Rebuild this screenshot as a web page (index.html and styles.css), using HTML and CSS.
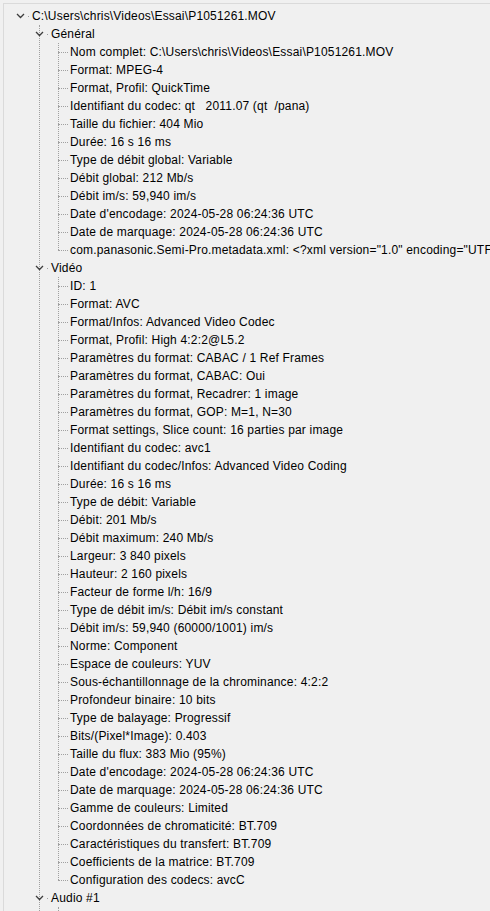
FILE: index.html
```html
<!DOCTYPE html>
<html lang="fr">
<head>
<meta charset="utf-8">
<title>MediaInfo</title>
<link rel="stylesheet" href="styles.css">
</head>
<body>
<div class="frame">
  <ul class="tree level0">
    <li class="node">
      <div class="row"><span class="exp open"><svg viewBox="0 0 9 6" width="9" height="6"><polyline points="1,1 4.5,4.5 8,1"/></svg></span><span class="label">C:\Users\chris\Videos\Essai\P1051261.MOV</span></div>
      <ul class="tree level1">
        <li class="node">
          <div class="row"><span class="exp open"><svg viewBox="0 0 9 6" width="9" height="6"><polyline points="1,1 4.5,4.5 8,1"/></svg></span><span class="label">Général</span></div>
          <ul class="tree level2">
            <li class="leaf"><div class="row"><span class="exp"></span><span class="label">Nom complet: C:\Users\chris\Videos\Essai\P1051261.MOV</span></div></li>
            <li class="leaf"><div class="row"><span class="exp"></span><span class="label">Format: MPEG-4</span></div></li>
            <li class="leaf"><div class="row"><span class="exp"></span><span class="label">Format, Profil: QuickTime</span></div></li>
            <li class="leaf"><div class="row"><span class="exp"></span><span class="label">Identifiant du codec: qt   2011.07 (qt  /pana)</span></div></li>
            <li class="leaf"><div class="row"><span class="exp"></span><span class="label">Taille du fichier: 404 Mio</span></div></li>
            <li class="leaf"><div class="row"><span class="exp"></span><span class="label">Durée: 16 s 16 ms</span></div></li>
            <li class="leaf"><div class="row"><span class="exp"></span><span class="label">Type de débit global: Variable</span></div></li>
            <li class="leaf"><div class="row"><span class="exp"></span><span class="label">Débit global: 212 Mb/s</span></div></li>
            <li class="leaf"><div class="row"><span class="exp"></span><span class="label">Débit im/s: 59,940 im/s</span></div></li>
            <li class="leaf"><div class="row"><span class="exp"></span><span class="label">Date d'encodage: 2024-05-28 06:24:36 UTC</span></div></li>
            <li class="leaf"><div class="row"><span class="exp"></span><span class="label">Date de marquage: 2024-05-28 06:24:36 UTC</span></div></li>
            <li class="leaf"><div class="row"><span class="exp"></span><span class="label">com.panasonic.Semi-Pro.metadata.xml: &lt;?xml version="1.0" encoding="UTF-8"?&gt;</span></div></li>
          </ul>
        </li>
        <li class="node">
          <div class="row"><span class="exp open"><svg viewBox="0 0 9 6" width="9" height="6"><polyline points="1,1 4.5,4.5 8,1"/></svg></span><span class="label">Vidéo</span></div>
          <ul class="tree level2">
            <li class="leaf"><div class="row"><span class="exp"></span><span class="label">ID: 1</span></div></li>
            <li class="leaf"><div class="row"><span class="exp"></span><span class="label">Format: AVC</span></div></li>
            <li class="leaf"><div class="row"><span class="exp"></span><span class="label">Format/Infos: Advanced Video Codec</span></div></li>
            <li class="leaf"><div class="row"><span class="exp"></span><span class="label">Format, Profil: High 4:2:2@L5.2</span></div></li>
            <li class="leaf"><div class="row"><span class="exp"></span><span class="label">Paramètres du format: CABAC / 1 Ref Frames</span></div></li>
            <li class="leaf"><div class="row"><span class="exp"></span><span class="label">Paramètres du format, CABAC: Oui</span></div></li>
            <li class="leaf"><div class="row"><span class="exp"></span><span class="label">Paramètres du format, Recadrer: 1 image</span></div></li>
            <li class="leaf"><div class="row"><span class="exp"></span><span class="label">Paramètres du format, GOP: M=1, N=30</span></div></li>
            <li class="leaf"><div class="row"><span class="exp"></span><span class="label">Format settings, Slice count: 16 parties par image</span></div></li>
            <li class="leaf"><div class="row"><span class="exp"></span><span class="label">Identifiant du codec: avc1</span></div></li>
            <li class="leaf"><div class="row"><span class="exp"></span><span class="label">Identifiant du codec/Infos: Advanced Video Coding</span></div></li>
            <li class="leaf"><div class="row"><span class="exp"></span><span class="label">Durée: 16 s 16 ms</span></div></li>
            <li class="leaf"><div class="row"><span class="exp"></span><span class="label">Type de débit: Variable</span></div></li>
            <li class="leaf"><div class="row"><span class="exp"></span><span class="label">Débit: 201 Mb/s</span></div></li>
            <li class="leaf"><div class="row"><span class="exp"></span><span class="label">Débit maximum: 240 Mb/s</span></div></li>
            <li class="leaf"><div class="row"><span class="exp"></span><span class="label">Largeur: 3 840 pixels</span></div></li>
            <li class="leaf"><div class="row"><span class="exp"></span><span class="label">Hauteur: 2 160 pixels</span></div></li>
            <li class="leaf"><div class="row"><span class="exp"></span><span class="label">Facteur de forme l/h: 16/9</span></div></li>
            <li class="leaf"><div class="row"><span class="exp"></span><span class="label">Type de débit im/s: Débit im/s constant</span></div></li>
            <li class="leaf"><div class="row"><span class="exp"></span><span class="label">Débit im/s: 59,940 (60000/1001) im/s</span></div></li>
            <li class="leaf"><div class="row"><span class="exp"></span><span class="label">Norme: Component</span></div></li>
            <li class="leaf"><div class="row"><span class="exp"></span><span class="label">Espace de couleurs: YUV</span></div></li>
            <li class="leaf"><div class="row"><span class="exp"></span><span class="label">Sous-échantillonnage de la chrominance: 4:2:2</span></div></li>
            <li class="leaf"><div class="row"><span class="exp"></span><span class="label">Profondeur binaire: 10 bits</span></div></li>
            <li class="leaf"><div class="row"><span class="exp"></span><span class="label">Type de balayage: Progressif</span></div></li>
            <li class="leaf"><div class="row"><span class="exp"></span><span class="label">Bits/(Pixel*Image): 0.403</span></div></li>
            <li class="leaf"><div class="row"><span class="exp"></span><span class="label">Taille du flux: 383 Mio (95%)</span></div></li>
            <li class="leaf"><div class="row"><span class="exp"></span><span class="label">Date d'encodage: 2024-05-28 06:24:36 UTC</span></div></li>
            <li class="leaf"><div class="row"><span class="exp"></span><span class="label">Date de marquage: 2024-05-28 06:24:36 UTC</span></div></li>
            <li class="leaf"><div class="row"><span class="exp"></span><span class="label">Gamme de couleurs: Limited</span></div></li>
            <li class="leaf"><div class="row"><span class="exp"></span><span class="label">Coordonnées de chromaticité: BT.709</span></div></li>
            <li class="leaf"><div class="row"><span class="exp"></span><span class="label">Caractéristiques du transfert: BT.709</span></div></li>
            <li class="leaf"><div class="row"><span class="exp"></span><span class="label">Coefficients de la matrice: BT.709</span></div></li>
            <li class="leaf"><div class="row"><span class="exp"></span><span class="label">Configuration des codecs: avcC</span></div></li>
          </ul>
        </li>
        <li class="node">
          <div class="row"><span class="exp open"><svg viewBox="0 0 9 6" width="9" height="6"><polyline points="1,1 4.5,4.5 8,1"/></svg></span><span class="label">Audio #1</span></div>
          <div class="stub"></div>
        </li>
      </ul>
    </li>
  </ul>
</div>
</body>
</html>
```

FILE: styles.css
```css
html, body {
  margin: 0;
  padding: 0;
  background: #f0f0f0;
  overflow: hidden;
}

body {
  width: 490px;
  height: 911px;
  font-family: "Liberation Sans", Arial, sans-serif;
  font-size: 12px;
  letter-spacing: 0.18px;
  color: #000;
}

.frame {
  margin: 3px 0 0 3px;
  border-top: 1px solid #dadada;
  border-left: 1px solid #dadada;
  padding-top: 3px;
  height: 904px;
  overflow: hidden;
}

.tree {
  list-style: none;
  margin: 0;
  padding: 0;
  position: relative;
}

.level1,
.level2 {
  padding-left: 19px;
}

.row {
  display: flex;
  align-items: center;
  height: 18px;
  white-space: pre;
}

.exp {
  flex: none;
  width: 28px;
  height: 18px;
  position: relative;
}

.exp svg {
  position: absolute;
  left: 12px;
  top: 6px;
  fill: none;
  stroke: #3c3c3c;
  stroke-width: 1.3;
}

.exp.open::after {
  content: "";
  position: absolute;
  left: 24px;
  top: 9px;
  width: 1px;
  height: 1px;
  background: #a0a0a0;
}

.leaf .exp::before {
  content: "";
  position: absolute;
  left: 16px;
  top: 9px;
  width: 10px;
  border-top: 1px dotted #a0a0a0;
}

.label {
  line-height: 18px;
}

/* vertical connector lines */
.level1::before {
  content: "";
  position: absolute;
  left: 35px;
  top: 0;
  bottom: 0;
  border-left: 1px dotted #a0a0a0;
}

.level2::before {
  content: "";
  position: absolute;
  left: 35px;
  top: 0;
  bottom: 9px;
  border-left: 1px dotted #a0a0a0;
}

.stub {
  height: 18px;
  margin-left: 35px;
  border-left: 1px dotted #a0a0a0;
}
```
